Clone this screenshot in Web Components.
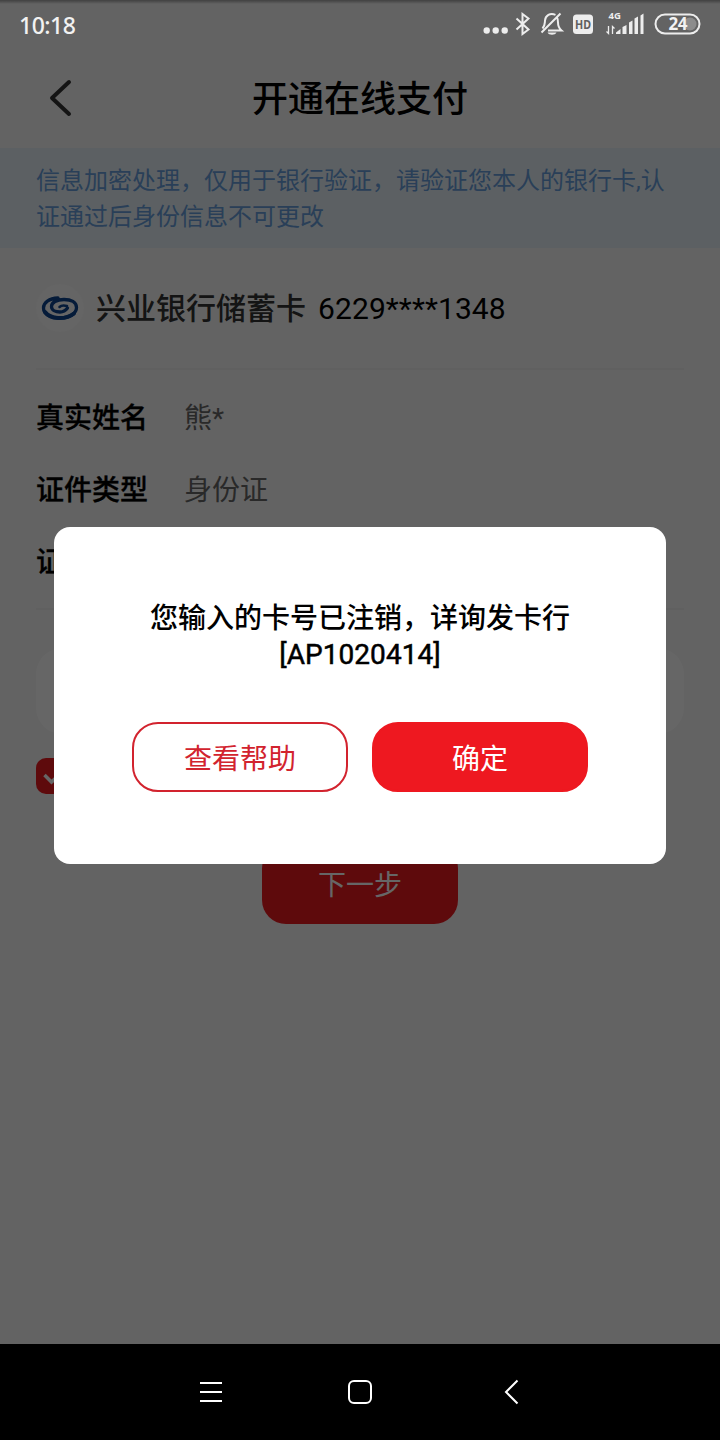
<!DOCTYPE html>
<html lang="zh-CN">
<head>
<meta charset="utf-8">
<title>开通在线支付</title>
<style>
    body {
        margin: 0;
        background-color: #f7f7f7;
        font-family: Roboto, "Noto Sans CJK SC", sans-serif;
        color: #000;
    }
    .code {
        font-weight: 400;
        letter-spacing: 0.05px;
        -webkit-text-stroke: 0.5px #000;
    }
</style>
</head>
<body>
<pay-screen>
    <status-bar slot="status" time="10:18" battery="24"></status-bar>
    <title-bar>开通在线支付</title-bar>
    <notice-bar>信息加密处理，仅用于银行验证，请验证您本人的银行卡,认证通过后身份信息不可更改</notice-bar>
    <bank-card name="兴业银行储蓄卡" number="6229****1348"></bank-card>
    <info-list>
        <info-row label="真实姓名">熊*</info-row>
        <info-row label="证件类型">身份证</info-row>
        <info-row label="证"></info-row>
    </info-list>
    <verify-form>下一步</verify-form>
    <alert-dialog slot="dialog">
        您输入的卡号已注销，详询发卡行<br><span class="code">[AP1020414]</span>
        <round-button slot="actions" outline>查看帮助</round-button>
        <round-button slot="actions">确定</round-button>
    </alert-dialog>
    <nav-bar slot="nav"></nav-bar>
</pay-screen>

<script>
class BaseElement extends HTMLElement {
    constructor(){
        super();
        this.shadowDOM = this.attachShadow({mode:"open"});
    }

    connectedCallback() {
        this.render();
    }
}

class PayScreen extends BaseElement {
    render(){
        this.shadowDOM.innerHTML = `
        <style>
            :host{
                display: flex;
                flex-direction: column;
                position: relative;
                width: 720px;
                height: 1440px;
                overflow: hidden;
            }
            main{
                flex: 1;
            }
            #scrim{
                position: absolute;
                inset: 0 0 96px;
                box-sizing: border-box;
                padding-top: 47px;
                display: flex;
                align-items: center;
                justify-content: center;
                background-color: rgba(0, 0, 0, 0.6);
            }
        </style>
        <slot name="status"></slot>
        <main><slot></slot></main>
        <slot name="nav"></slot>
        <div id="scrim"><slot name="dialog"></slot></div>`;
    }
}

class StatusBar extends BaseElement {
    render(){
        this.shadowDOM.innerHTML = `
        <style>
            :host{
                display: flex;
                justify-content: space-between;
                position: relative;
                z-index: 1;
                height: 48px;
                color: #f2f2f2;
                background: linear-gradient(rgba(0, 0, 0, 0.35), rgba(0, 0, 0, 0) 4px);
            }
            time{
                padding-left: 19px;
                font: 500 23px/50px "Noto Sans", sans-serif;
                letter-spacing: -0.5px;
            }
            svg{
                display: block;
            }
            text{
                font-family: "Noto Sans", sans-serif;
                font-weight: 700;
            }
        </style>
        <time>${this.getAttribute("time")}</time>
        <svg width="250" height="48" viewBox="470 0 250 48" fill="none" stroke="#ededed" stroke-width="2">
            <g fill="#ededed" stroke="none">
                <circle cx="486.700" cy="30.500" r="3.200"/>
                <circle cx="495.700" cy="30.500" r="3.200"/>
                <circle cx="504.700" cy="30.500" r="3.200"/>
            </g>
            <path d="M516.500 18.500l12 11-6 4.500V14l6 4.500-12 11"/>
            <path d="M548 30.500h13.500c-3-2.500-3.500-5-3.500-8 0-2.500-.3-4-1-5M555.500 14.800c-5.500-2.300-10 .7-10.500 5.700-.3 3 .2 5-2.500 8M541.500 32.500L560.500 13.500"/>
            <path d="M547.500 32.500h9c-1.500 3-7.500 3-9 0z" fill="#ededed" stroke="none"/>
            <rect x="573" y="14.500" width="20" height="19.500" rx="3.500" fill="#ededed" stroke="none"/>
            <text x="583" y="28.800" font-size="12" text-anchor="middle" fill="#606060" stroke="none" textLength="16" lengthAdjust="spacingAndGlyphs">HD</text>
            <text x="608.500" y="19" font-size="9.500" fill="#ededed" stroke="none">4G</text>
            <path d="M608.500 26v7.500l-2-2M612.500 34v-7.500l2 2" stroke-width="1.300"/>
            <path d="M616 34v-1.500l4.500-3.500v5zM622.500 34v-7l4-2v9zM629 34V22.500l3.500-2V34zM634.500 34V18.500l3.500-2V34zM640.500 34V15.500l3-2V34z" fill="#ededed" stroke="none"/>
            <rect x="655.500" y="14.500" width="44" height="19" rx="9.500"/>
            <circle cx="690" cy="24" r="6.500" fill="#8c8c8c" stroke="none"/>
            <text x="678" y="30" font-size="17" text-anchor="middle" fill="#f2f2f2" stroke="none" textLength="19">${this.getAttribute("battery")}</text>
        </svg>`;
    }
}

class TitleBar extends BaseElement {
    render(){
        this.shadowDOM.innerHTML = `
        <style>
            :host{
                display: grid;
                grid-template-columns: 120px 1fr 120px;
                align-items: center;
                height: 100px;
            }
            h1{
                margin: 4px 0 0;
                text-align: center;
                font-size: 36px;
                font-weight: 500;
                line-height: 50px;
            }
        </style>
        <svg width="120" height="100" fill="none" stroke="#333" stroke-width="4" stroke-linecap="round" stroke-linejoin="round">
            <path d="M69 34L52 50l17 16"/>
        </svg>
        <h1><slot></slot></h1>`;
    }
}

class NoticeBar extends BaseElement {
    render(){
        this.shadowDOM.innerHTML = `
        <style>
            :host{
                display: block;
                box-sizing: border-box;
                height: 100px;
                padding: 15px 36px;
                background-color: #e6f0f8;
                color: #689edb;
                font-size: 24px;
                line-height: 36px;
            }
        </style>
        <slot></slot>`;
    }
}

class BankCard extends BaseElement {
    render(){
        this.shadowDOM.innerHTML = `
        <style>
            :host{
                display: flex;
                align-items: center;
                height: 120px;
                margin: 0 36px;
                border-bottom: 2px solid #efefef;
                font-size: 30px;
            }
            #name{
                margin: 0 12px 4px;
                color: #333;
                font-weight: 500;
            }
            #number{
                letter-spacing: 0.1px;
            }
        </style>
        <svg width="48" height="48">
            <circle cx="24" cy="24" r="24" fill="#fcfcfc"/>
            <g fill="none" stroke="#0d4590" stroke-linecap="round">
                <path d="M22 14C13 14.500 7.500 18.500 7.500 24c0 6 7 10 16.500 10s16.500-4.500 16.500-10.500C40.500 18 35 15.500 28 15.500c-7.500 0-12.500 3-12.500 7 0 3.500 4 5.500 8.500 5.500 3.500 0 6-2 7.500-4" stroke-width="3.300"/>
                <path d="M23.500 23c1.500-1.500 4-2 7.500-1" stroke-width="2.500"/>
                <path d="M9 28c5 7 20 8.500 29 1.500" stroke-width="4"/>
            </g>
        </svg>
        <span id="name">${this.getAttribute("name")}</span>
        <span id="number">${this.getAttribute("number")}</span>`;
    }
}

class InfoList extends BaseElement {
    render(){
        this.shadowDOM.innerHTML = `
        <style>
            :host{
                display: block;
                box-sizing: border-box;
                height: 240px;
                margin: 0 36px;
                padding-top: 10px;
                border-bottom: 2px solid #efefef;
            }
        </style>
        <slot></slot>`;
    }
}

class InfoRow extends BaseElement {
    render(){
        this.shadowDOM.innerHTML = `
        <style>
            :host{
                display: flex;
                align-items: center;
                height: 72px;
                font-size: 28px;
                color: #666;
            }
            b{
                width: 148px;
                color: #000;
                font-weight: 500;
                -webkit-text-stroke: 0.3px #000;
            }
        </style>
        <b>${this.getAttribute("label")}</b>
        <slot></slot>`;
    }
}

class VerifyForm extends BaseElement {
    render(){
        this.shadowDOM.innerHTML = `
        <style>
            :host{
                display: flex;
                flex-direction: column;
                padding: 38px 36px 0;
            }
            #field{
                height: 86px;
                border-radius: 26px;
                background-color: #fff;
            }
            #check{
                width: 36px;
                height: 36px;
                margin: 24px 0 50px;
                border-radius: 10px;
                background-color: #ec1920;
            }
            button{
                align-self: center;
                width: 196px;
                height: 80px;
                padding: 0 0 3px;
                border: 0;
                border-radius: 24px;
                background-color: #ec1920;
                color: #fff;
                font: inherit;
                font-size: 28px;
            }
        </style>
        <div id="field"></div>
        <svg id="check" fill="none" stroke="#fff" stroke-width="3.500">
            <path d="M8.500 17l7 7L27 13"/>
        </svg>
        <button type="button"><slot></slot></button>`;
    }
}

class AlertDialog extends BaseElement {
    render(){
        this.shadowDOM.innerHTML = `
        <style>
            :host{
                display: block;
                box-sizing: border-box;
                width: 612px;
                height: 337px;
                padding-top: 74px;
                border-radius: 16px;
                background-color: #fff;
            }
            #message{
                height: 121px;
                text-align: center;
                font-size: 28px;
                font-weight: 500;
                line-height: 36px;
            }
            #actions{
                display: flex;
                justify-content: center;
                gap: 24px;
            }
        </style>
        <div id="message"><slot></slot></div>
        <div id="actions"><slot name="actions"></slot></div>`;
    }
}

class RoundButton extends BaseElement {
    render(){
        this.shadowDOM.innerHTML = `
        <style>
            button{
                display: block;
                width: 216px;
                height: 70px;
                padding: 0;
                border: 2px solid #ee1820;
                border-radius: 26px;
                background-color: #ee1820;
                color: #fff;
                font: inherit;
                font-size: 28px;
                font-weight: 400;
            }
            :host{
                display: block;
            }
            :host([outline]) button{
                border-color: #d2232e;
                background-color: #fff;
                color: #d2232e;
            }
        </style>
        <button type="button"><slot></slot></button>`;
    }
}

class NavBar extends BaseElement {
    render(){
        this.shadowDOM.innerHTML = `
        <style>
            :host{
                display: flex;
                justify-content: center;
                gap: 102px;
                height: 96px;
                background-color: #000;
            }
        </style>
        <svg width="48" height="96" stroke="#fff" stroke-width="2">
            <path d="M14 39h22M14 48h22M14 57h22"/>
        </svg>
        <svg width="48" height="96" fill="none" stroke="#fff" stroke-width="2">
            <rect x="13" y="37" width="22" height="22" rx="5"/>
        </svg>
        <svg width="48" height="96" fill="none" stroke="#fff" stroke-width="2">
            <path d="M31.500 36.500L20 48l11.500 11.500"/>
        </svg>`;
    }
}

customElements.define("pay-screen", PayScreen);
customElements.define("status-bar", StatusBar);
customElements.define("title-bar", TitleBar);
customElements.define("notice-bar", NoticeBar);
customElements.define("bank-card", BankCard);
customElements.define("info-list", InfoList);
customElements.define("info-row", InfoRow);
customElements.define("verify-form", VerifyForm);
customElements.define("alert-dialog", AlertDialog);
customElements.define("round-button", RoundButton);
customElements.define("nav-bar", NavBar);
</script>
</body>
</html>
